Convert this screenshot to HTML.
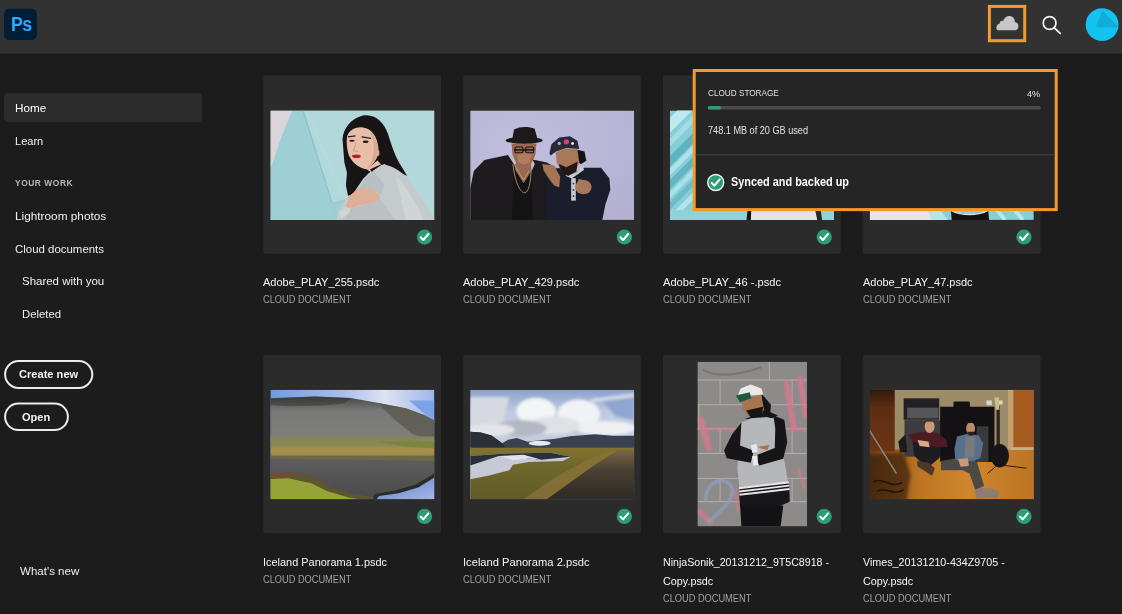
<!DOCTYPE html>
<html lang="en">
<head>
<meta charset="utf-8">
<title>Photoshop Home</title>
<style>
*{box-sizing:border-box;margin:0;padding:0}
html,body{width:1122px;height:614px;overflow:hidden;background:#1c1c1c;font-family:"Liberation Sans",sans-serif;color:#fff}
#bg{position:absolute;left:0;top:0;display:block}
.t{position:absolute;white-space:nowrap;line-height:16px;height:16px;display:block;transform-origin:0 50%}
#pst{position:absolute;left:10.7px;top:12.6px;color:#31a8ff;font-weight:bold;font-size:19.5px;line-height:22px;letter-spacing:-0.6px;transform:scaleX(.91);transform-origin:0 50%;white-space:nowrap}
</style>
</head>
<body>
<svg id="bg" width="1122" height="614" viewBox="0 0 1122 614">
<defs>
<g id="ck"><circle r="7.6" fill="#2d9d78"/><path d="M-3.9 0.3 L-1.3 3 L3.8 -3" fill="none" stroke="#fff" stroke-width="2" stroke-linecap="round" stroke-linejoin="round"/></g>
<clipPath id="avc"><circle cx="1102.1" cy="24.6" r="16.4"/></clipPath>
</defs>
<!-- header -->
<rect x="0" y="0" width="1122" height="53.5" fill="#323232"/>
<rect x="4.1" y="8.8" width="32.7" height="31.3" rx="5" fill="#001e36"/>
<rect x="989.4" y="6.4" width="35.3" height="34.3" fill="none" stroke="#f39a2c" stroke-width="3"/>
<path d="M998.6 30.3 C996.9 30.3 996.2 28.6 996.4 27.2 C996.6 25.2 998.2 23.9 999.6 23.8 C999.5 21.6 1001.2 20.3 1003.2 20.9 C1003.8 17.9 1006.4 15.9 1009.3 15.9 C1012.6 15.9 1015 18.4 1014.8 22 C1017 22.2 1018.5 24 1018.4 26.4 C1018.3 28.6 1016.9 30.3 1014.8 30.3 Z" fill="#c6c6c6"/>
<circle cx="1049.6" cy="23" r="6.4" fill="none" stroke="#f2f2f2" stroke-width="1.7"/>
<path d="M1054.3 27.9 L1060.2 33.4" stroke="#f2f2f2" stroke-width="1.9" stroke-linecap="round"/>
<circle cx="1102.1" cy="24.6" r="16.4" fill="#13c4f3"/>
<path d="M1102.2 10.4 L1095.5 27.4 L1119.5 27.4 Z" fill="#10add9" clip-path="url(#avc)"/>
<!-- sidebar -->
<rect x="4" y="93" width="198" height="28.9" rx="4" fill="#2c2c2c"/>
<rect x="5.1" y="361" width="87.2" height="26.9" rx="13.45" fill="none" stroke="#ebebeb" stroke-width="2"/>
<rect x="5.1" y="403.5" width="62.8" height="26.5" rx="13.25" fill="none" stroke="#ebebeb" stroke-width="2"/>
<!-- cards -->
<g fill="#2b2b2b">
<rect x="263.3" y="75.6" width="177.8" height="178.1" rx="2.5"/><rect x="463.1" y="75.6" width="177.8" height="178.1" rx="2.5"/><rect x="662.9" y="75.6" width="177.8" height="178.1" rx="2.5"/><rect x="862.7" y="75.6" width="177.8" height="178.1" rx="2.5"/>
<rect x="263.3" y="355.1" width="177.8" height="178.1" rx="2.5"/><rect x="463.1" y="355.1" width="177.8" height="178.1" rx="2.5"/><rect x="662.9" y="355.1" width="177.8" height="178.1" rx="2.5"/><rect x="862.7" y="355.1" width="177.8" height="178.1" rx="2.5"/>
</g>
<!-- photo 1 -->
<svg x="270.4" y="110.5" width="164" height="109.4" viewBox="0 0 921 614" preserveAspectRatio="none">
<defs><filter id="b3"><feGaussianBlur stdDeviation="3"/></filter><filter id="b8"><feGaussianBlur stdDeviation="8"/></filter>
<linearGradient id="p1bg" x1="0" x2="1"><stop offset="0" stop-color="#9dcfd5"/><stop offset=".45" stop-color="#add6dc"/><stop offset="1" stop-color="#b6d9e0"/></linearGradient></defs>
<rect width="921" height="614" fill="url(#p1bg)"/>
<path d="M0 0H124L62 150L0 335Z" fill="#d9d5da"/>
<path d="M124 0H183L345 515L335 614H0V335L62 150Z" fill="#9dcfd4"/>
<path d="M183 0H921V614H335L345 515Z" fill="#b2d8dc"/>
<path d="M345 515L420 498L400 614H335Z" fill="#9fcdd4"/>
<path d="M183 0L345 515" stroke="#8cc2c9" stroke-width="7" fill="none"/>
<path d="M200 0L420 498" stroke="#c2ecec" stroke-width="5" fill="none" opacity=".3"/>
<path d="M405 160C410 100 450 45 520 28C590 15 640 70 660 130C680 190 695 250 740 320L768 368L700 335L640 300L600 320L555 350L520 385L490 430L462 470L436 478L424 420L430 350L415 290Z" fill="#191516"/>
<path d="M430 150C438 110 480 88 520 95C570 100 600 150 606 205C612 250 590 290 560 315L600 280L625 305L570 350L540 330C500 325 455 290 440 250C430 220 426 180 430 150Z" fill="#e7bea7"/>
<path d="M560 330L625 300L640 320L575 355Z" fill="#151313"/>
<ellipse cx="483" cy="257" rx="25" ry="10" fill="#bf1a2c"/>
<path d="M560 120C600 150 612 215 600 262L560 315L540 330C575 290 590 220 575 160Z" fill="#d2a48d" opacity=".8"/>
<path d="M436 148L478 142M512 148L566 156" stroke="#2a1c1a" stroke-width="7" fill="none"/>
<ellipse cx="458" cy="170" rx="15" ry="6" fill="#2a1a18"/><ellipse cx="535" cy="176" rx="17" ry="7" fill="#2a1a18"/>
<path d="M480 180L468 226L490 230" stroke="#cf9c84" stroke-width="6" fill="none"/>
<ellipse cx="603" cy="238" rx="9" ry="18" fill="#dcae96"/>
<path d="M625 305C680 305 730 340 770 380C820 440 870 530 921 600V614H370L382 560L420 505L468 470L500 420L540 370L580 335Z" fill="#c5cbcd"/>
<path d="M700 360C760 420 820 520 860 614H760C740 520 720 440 700 360Z" fill="#d3d8d9" opacity=".7"/>
<path d="M440 482L500 432L560 440L610 468L616 500L562 522L500 532L452 552L424 542Z" fill="#ddb097"/>
<path d="M424 542L452 552L440 580L400 600L385 570Z" fill="#d0d5d6"/><path d="M540 372L580 336L640 420L620 470L560 440L500 432Z" fill="#b2babd" opacity=".7"/><path d="M452 552L562 522L616 500L700 614H400L440 580Z" fill="#b6bdc0" opacity=".8"/>
</svg>
<!-- photo 2 -->
<svg x="470.2" y="110.5" width="164" height="109.4" viewBox="0 0 921 614" preserveAspectRatio="none">
<defs><radialGradient id="p2bg" cx=".3" cy=".3" r=".9"><stop offset="0" stop-color="#c1bedd"/><stop offset="1" stop-color="#b4b0d1"/></radialGradient></defs>
<rect width="921" height="614" fill="url(#p2bg)"/>
<!-- left man -->
<path d="M0 440L20 340L80 278L212 250L245 300L300 400L345 340L372 280L430 300L445 420V614H0Z" fill="#1d1b1e"/>
<path d="M232 185H372L366 250L342 300L345 350L300 410L250 340L258 295L238 250Z" fill="#9a6850"/>
<path d="M245 320L300 410L345 335L350 614H235Z" fill="#141315"/>
<path d="M248 300L300 385L340 310" fill="#9a6850"/>
<path d="M240 300C250 400 280 460 305 462C330 460 340 400 342 330" fill="none" stroke="#b49a6a" stroke-width="5"/>
<path d="M250 310L300 390L330 340" fill="none" stroke="#c4b08a" stroke-width="4"/>
<path d="M236 160L246 106C280 88 330 88 362 102L378 160Z" fill="#1b191b"/>
<ellipse cx="303" cy="168" rx="104" ry="19" fill="#1b191b"/>
<path d="M262 245L300 235L345 245L335 290L300 305L268 288Z" fill="#b07c60"/><path d="M246 222H360" stroke="#1a1414" stroke-width="8"/>
<rect x="252" y="205" width="44" height="32" rx="6" fill="none" stroke="#1a1414" stroke-width="6"/>
<rect x="312" y="205" width="44" height="32" rx="6" fill="none" stroke="#1a1414" stroke-width="6"/>
<!-- right man body -->
<path d="M430 330L520 322L545 372L640 322L735 322L782 382L787 445L760 525L742 614H425V420Z" fill="#1a1d2b"/>
<path d="M350 275L430 292L480 320L440 345L372 320Z" fill="#1d1b1e"/>
<path d="M405 300L470 308L505 370L500 432L470 420L440 380L412 335Z" fill="#a67454"/>
<path d="M533 365L570 382L640 332L628 308L600 345L558 362Z" fill="#c9c9cf"/>
<rect x="567" y="380" width="26" height="126" fill="#c9c9cf"/>
<circle cx="580" cy="410" r="5" fill="#222"/><circle cx="580" cy="445" r="5" fill="#222"/><circle cx="580" cy="480" r="5" fill="#222"/>
<path d="M600 220L642 230L652 282L622 302L600 282Z" fill="#151214"/>
<path d="M480 236L540 213L602 218L612 290L592 342L546 358L506 332L486 290Z" fill="#a87858"/>
<path d="M498 300L540 318L604 286L596 342L550 368L510 342Z" fill="#231815"/>
<path d="M445 242L456 190L500 152L560 145L602 170L612 216L540 210L480 232L452 252Z" fill="#2a2838"/>
<circle cx="540" cy="176" r="15" fill="#d2447f"/><circle cx="500" cy="185" r="9" fill="#7fc4c0"/><circle cx="575" cy="185" r="8" fill="#e8e0e8"/>
<ellipse cx="636" cy="430" rx="46" ry="40" fill="#a87858"/>
<path d="M600 410L610 385L640 392" fill="#a87858"/>
</svg>
<!-- photo 3 (mostly hidden) -->
<svg x="670.0" y="110.5" width="164" height="109.4" viewBox="0 0 921 614" preserveAspectRatio="none">
<rect width="921" height="614" fill="#88ced7"/>
<g fill="none" filter="url(#b3)">
<path d="M-50 133L250 -167" stroke="#bdeaef" stroke-width="60"/>
<path d="M-50 230L250 -70" stroke="#a2dde4" stroke-width="30"/>
<path d="M-50 335L250 35" stroke="#5fb2bf" stroke-width="42"/>
<path d="M-50 395L250 95" stroke="#b0e4ea" stroke-width="26"/>
<path d="M-50 466L250 166" stroke="#62b4c1" stroke-width="36"/>
<path d="M-50 526L250 226" stroke="#a8e0e7" stroke-width="26"/>
<path d="M-50 585L250 285" stroke="#6cbcc8" stroke-width="30"/>
<path d="M-50 660L250 360" stroke="#b0e4ea" stroke-width="30"/>
</g>
<path d="M0 560H921V614H0Z" fill="#8ed2da"/>
<path d="M437 540H459L454 614H430Z" fill="#1a1616"/>
<path d="M459 540H812L827 614H454Z" fill="#dfe3e4"/>
<path d="M812 540H844L854 614H827Z" fill="#2a2626"/>
</svg>
<!-- photo 4 (mostly hidden) -->
<svg x="869.8" y="110.5" width="164" height="109.4" viewBox="0 0 921 614" preserveAspectRatio="none">
<rect width="921" height="614" fill="#86cfd6"/>
<path d="M0 540H320L350 614H0Z" fill="#e6e4e6"/>
<path d="M320 540H380L440 614H350Z" fill="#b7e3e6"/>
<path d="M455 560C520 590 600 590 665 560L670 614H460Z" fill="#151314"/>
<path d="M455 560C520 592 600 592 665 560" fill="none" stroke="#e0e0e0" stroke-width="8"/>
<path d="M700 540L760 614M800 540L860 614" stroke="#b9e6ea" stroke-width="22"/>
</svg>
<!-- photo 5 Iceland 1 -->
<svg x="270.4" y="389.8" width="164" height="109.4" viewBox="0 0 921 614" preserveAspectRatio="none">
<defs>
<linearGradient id="p5sky" x1="0" x2="1"><stop offset="0" stop-color="#6f9ae2"/><stop offset=".45" stop-color="#a9c0ec"/><stop offset=".7" stop-color="#dde3f1"/><stop offset="1" stop-color="#9db6ea"/></linearGradient>
<linearGradient id="p5mt" x1="0" y1="0" x2="0" y2="1"><stop offset="0" stop-color="#454543"/><stop offset=".1" stop-color="#565654"/><stop offset=".3" stop-color="#787876"/><stop offset=".8" stop-color="#7e7e7b"/><stop offset="1" stop-color="#84845e"/></linearGradient>
<linearGradient id="p5pl" x1="0" y1="0" x2="0" y2="1"><stop offset="0" stop-color="#84845e"/><stop offset=".4" stop-color="#8c8854"/><stop offset=".6" stop-color="#a8924e"/><stop offset=".85" stop-color="#a08a48"/><stop offset="1" stop-color="#5c5c38"/></linearGradient>
<linearGradient id="p5wt" x1="0" y1="0" x2="0" y2="1"><stop offset="0" stop-color="#5e5e5e"/><stop offset="1" stop-color="#4a4a4c"/></linearGradient>
<linearGradient id="p5gr" x1="0" y1="0" x2="0" y2="1"><stop offset="0" stop-color="#6a5a2c"/><stop offset=".3" stop-color="#8c9a32"/><stop offset="1" stop-color="#9aa838"/></linearGradient>
<linearGradient id="p5bl" x1="0" y1="0" x2="1" y2="1"><stop offset="0" stop-color="#5f7fc8"/><stop offset="1" stop-color="#a3b6e6"/></linearGradient>
</defs>
<rect width="921" height="614" fill="url(#p5sky)"/>
<path d="M780 60L921 60V190L860 130Z" fill="#7ea2e6"/>
<path d="M0 47L250 38L450 46L600 72L760 104L860 140L921 172V300H0Z" fill="url(#p5mt)"/>
<path d="M600 72L760 104L860 140L921 172V285L800 250L700 170Z" fill="#55564a" opacity=".7"/>
<path d="M0 47L250 38L450 46L420 75L300 88L100 92L0 85Z" fill="#2f2f2e" opacity=".45"/>
<rect y="262" width="921" height="120" fill="url(#p5pl)"/>
<path d="M600 290H921V330L760 320Z" fill="#76843a" opacity=".8"/>
<path d="M0 375H921V614H0Z" fill="url(#p5wt)"/>
<path d="M0 375H921V400L500 392L0 385Z" fill="#6c6f40" opacity=".8"/>
<path d="M921 470L820 530L700 565L590 585L560 614H921Z" fill="#2b2b2a"/>
<path d="M921 492L830 548L720 580L610 596L596 614H921Z" fill="url(#p5bl)"/>
<path d="M0 470L100 464L250 488L330 540L450 583L580 600V614H0Z" fill="#5c5630"/><path d="M0 500L100 496L230 525L320 570L440 605L500 614H0Z" fill="#96a438"/><path d="M0 470L100 464L200 480L120 490L0 498Z" fill="#7a4a30" opacity=".7"/>
</svg>
<!-- photo 6 Iceland 2 -->
<svg x="470.2" y="389.8" width="164" height="109.4" viewBox="0 0 921 614" preserveAspectRatio="none">
<defs>
<linearGradient id="p6sky" x1="0" y1="0" x2="0" y2="1"><stop offset="0" stop-color="#8ba1cd"/><stop offset=".2" stop-color="#c0cbe0"/><stop offset="1" stop-color="#cdd1da"/></linearGradient>
<linearGradient id="p6rd" x1="0" y1="0" x2="0" y2="1"><stop offset="0" stop-color="#7a6444"/><stop offset=".4" stop-color="#4a4034"/><stop offset="1" stop-color="#2e2a26"/></linearGradient>
<linearGradient id="p6gr" x1="0" y1="0" x2="0" y2="1"><stop offset="0" stop-color="#84722e"/><stop offset=".35" stop-color="#6e682c"/><stop offset="1" stop-color="#625a28"/></linearGradient>
</defs>
<rect width="921" height="614" fill="url(#p6sky)"/>
<g filter="url(#b8)">
<path d="M0 40H220L180 200L0 220Z" fill="#d6d9e0"/>
<ellipse cx="370" cy="120" rx="110" ry="75" fill="#f4f5f7"/>
<ellipse cx="610" cy="135" rx="120" ry="80" fill="#f1f2f5"/>
<ellipse cx="760" cy="215" rx="170" ry="40" fill="#eeeff2"/>
<ellipse cx="470" cy="200" rx="150" ry="50" fill="#dfe1e6"/>
<ellipse cx="280" cy="215" rx="150" ry="45" fill="#b4b8c2"/>
<ellipse cx="120" cy="225" rx="130" ry="35" fill="#e3e5ea"/>
<path d="M700 20H921V170L820 150Z" fill="#8ea6d0"/>
<path d="M680 60L921 30" stroke="#d9dfea" stroke-width="20"/>
</g>
<path d="M0 235L60 240L120 256L180 300L212 280L262 270L322 292L400 282L470 276L560 260L700 250L800 258L921 258V335H0Z" fill="#394150"/>
<path d="M0 235L60 240L120 256L180 300L200 325H0Z" fill="#2b3038"/>
<ellipse cx="390" cy="300" rx="62" ry="14" fill="#e6e9ee" filter="url(#b3)"/>
<rect y="325" width="921" height="289" fill="url(#p6gr)"/>
<path d="M0 372L200 358L450 353L565 376L520 400L330 405L240 420L220 452L100 482L0 502Z" fill="#c5cad6"/>
<path d="M0 372L200 358L450 353L565 376L400 392L160 372L0 425Z" fill="#2b3038"/>
<path d="M160 372L240 395L330 385L400 392L300 365Z" fill="#dfe3ea"/>
<path d="M830 338H921V614H430L560 520L700 420Z" fill="url(#p6rd)"/>
<path d="M700 372L830 338L700 420L560 520L430 614H300L480 490Z" fill="#8a7238" opacity=".8"/>
</svg>
<!-- photo 7 NinjaSonik -->
<svg x="697.4" y="361.8" width="109.6" height="164.6" viewBox="0 0 411 614" preserveAspectRatio="none">
<rect width="411" height="614" fill="#8d8b89"/>
<g stroke="#b4b0ac" stroke-width="3.5" fill="none"><path d="M0 68H411M0 160H411M0 250H411M0 342H411M0 435H411M0 522H411"/><path d="M270 0V68M85 68V160M355 68V160M210 160V250M5 160V250M85 250V342M355 250V342M210 342V435M85 435V522M355 435V522M210 522V614"/></g>
<g fill="none" stroke="#d9788e" stroke-linecap="round" opacity=".8" filter="url(#b3)"><path d="M12 215L42 320" stroke-width="24"/><path d="M0 252H150" stroke-width="8"/><path d="M335 80L362 250" stroke-width="22"/><path d="M385 60L405 200" stroke-width="20"/><path d="M140 480L155 560" stroke-width="10"/><path d="M340 255H411" stroke-width="8"/><path d="M10 560L50 600" stroke-width="18"/><path d="M380 400L400 470" stroke-width="10"/></g>
<path d="M30 520C30 440 110 420 130 470C140 520 80 560 40 600" fill="none" stroke="#8e9cbc" stroke-width="14" opacity=".8"/>
<path d="M20 30C80 60 150 50 240 20" fill="none" stroke="#6e6c6c" stroke-width="8" opacity=".7"/>
<path d="M240 118L276 160L272 200L244 196Z" fill="#161414"/>
<path d="M165 140L240 124L250 180L226 206L190 201L170 176Z" fill="#a87450"/>
<path d="M183 182L246 168L242 206L206 217Z" fill="#1a1412"/>
<path d="M150 130L162 100L200 85L240 100L247 122Z" fill="#e9e9e5"/>
<path d="M144 126L196 114L202 136L160 151Z" fill="#1c5a3c"/>
<path d="M178 212L270 186L302 200L252 222Z" fill="#161416"/>
<path d="M165 226L200 211L260 206L300 216L312 300L332 400L342 466L160 492L150 400L155 300Z" fill="#b5b7bb"/>
<path d="M285 200L326 216L337 300L322 362L232 387L215 350L290 322L292 250Z" fill="#171518"/>
<path d="M165 226L130 270L100 330L110 360L200 377L212 332L160 312Z" fill="#171518"/>
<path d="M200 312L222 306L226 336L206 340ZM205 352L225 348L228 384L210 388Z" fill="#e8e8e8"/>
<path d="M225 318L270 310L262 330Z" fill="#a87450"/>
<path d="M156 468L342 446L345 480L160 504Z" fill="#e6e6e6"/>
<path d="M157 478L343 456M158 490L344 468" stroke="#1a1a1c" stroke-width="5"/>
<path d="M157 500L345 478L346 522L300 542H160Z" fill="#17161a"/>
<path d="M160 536H322L312 614H165Z" fill="#121214"/>
</svg>
<!-- photo 8 Vimes -->
<svg x="869.8" y="389.8" width="164" height="109.4" viewBox="0 0 921 614" preserveAspectRatio="none">
<defs>
<linearGradient id="p8fl" x1="0" y1="0" x2="1" y2="0"><stop offset="0" stop-color="#6a3c12"/><stop offset=".3" stop-color="#bc7422"/><stop offset=".6" stop-color="#d0862c"/><stop offset="1" stop-color="#bc7424"/></linearGradient>
<linearGradient id="p8ld" x1="0" y1="0" x2="0" y2="1"><stop offset="0" stop-color="#34180a"/><stop offset=".3" stop-color="#5e2e12"/><stop offset="1" stop-color="#6a3414"/></linearGradient>
</defs>
<rect width="921" height="614" fill="#9c8c68"/>
<rect y="335" width="921" height="279" fill="url(#p8fl)"/>
<rect width="140" height="345" fill="url(#p8ld)"/>
<rect x="805" width="116" height="328" fill="#a65c20"/>
<rect x="776" width="30" height="335" fill="#c4a070"/>
<rect x="790" y="322" width="131" height="16" fill="#c8b088"/>
<path d="M-40 370L190 350L230 480L200 650H-40Z" fill="#3a220e" opacity=".7" filter="url(#b8)"/>
<path d="M0 230L150 470" stroke="#8a8a88" stroke-width="8"/>
<rect x="190" y="48" width="200" height="120" fill="#222024"/>
<rect x="210" y="100" width="176" height="60" fill="#55555a"/>
<rect x="195" y="170" width="215" height="205" fill="#3c3c40"/>
<rect x="395" y="95" width="305" height="310" fill="#131113"/>
<rect x="470" y="65" width="92" height="40" rx="8" fill="#131113"/>
<rect x="600" y="205" width="66" height="200" fill="#3a3a3c"/>
<rect x="655" y="60" width="30" height="26" fill="#d8d4c8"/><rect x="716" y="60" width="30" height="22" fill="#d8d4c8"/>
<rect x="712" y="90" width="18" height="250" fill="#2a2220"/>
<path d="M700 45L724 40L728 112L708 112Z" fill="#cdbd8c"/>
<ellipse cx="730" cy="370" rx="52" ry="66" fill="#171517"/>
<path d="M160 290L200 250L210 350L170 350Z" fill="#1c1a1a"/>
<!-- left man -->
<path d="M240 290L400 320L392 382L342 424L282 402L250 372Z" fill="#1d1d21"/>
<path d="M215 252L300 236L380 241L430 282L436 322L380 322L300 302L240 292Z" fill="#4c1c24"/>
<ellipse cx="336" cy="206" rx="28" ry="36" fill="#c99a7a"/>
<path d="M304 190C306 160 366 160 368 190L360 178L312 180Z" fill="#4a3020"/>
<path d="M268 282L330 290L336 322L280 316Z" fill="#d9a988"/>
<path d="M265 400L330 410L365 440L350 482L300 450L268 430Z" fill="#4a3828"/>
<!-- right man -->
<path d="M400 400L480 385L600 400L642 540L592 562L560 470L520 452L400 452Z" fill="#4b4945"/>
<path d="M490 262L550 246L612 256L637 302L622 382L582 402L480 392L475 332Z" fill="#58708c"/>
<path d="M538 262L590 262L586 380L532 380Z" fill="#7a7a7a"/>
<ellipse cx="566" cy="216" rx="25" ry="35" fill="#b88c68"/>
<path d="M538 200C540 160 598 160 600 205L592 186L546 186Z" fill="#181414"/>
<path d="M548 236L586 236L580 256L556 256Z" fill="#2a1c18"/>
<path d="M495 388L552 384L556 428L510 432Z" fill="#c99a7a"/>
<path d="M585 560C620 545 700 548 726 570L722 606L600 612Z" fill="#8e7e72"/>
<path d="M660 470L720 420M720 420L880 440" stroke="#1a1412" stroke-width="5" fill="none"/>
<path d="M20 520C60 480 120 560 180 520M40 570C90 540 140 600 190 560" stroke="#20140a" stroke-width="8" fill="none"/>
</svg>

<use href="#ck" x="424.6" y="237"/><use href="#ck" x="624.4" y="237"/><use href="#ck" x="824.2" y="237"/><use href="#ck" x="1024" y="237"/>
<use href="#ck" x="424.6" y="516.4"/><use href="#ck" x="624.4" y="516.4"/><use href="#ck" x="824.2" y="516.4"/><use href="#ck" x="1024" y="516.4"/>
<!-- popup -->
<rect x="694.2" y="70.5" width="362" height="139.1" fill="#252525" stroke="#f39a2c" stroke-width="3"/>
<rect x="707.9" y="106" width="333" height="3.4" rx="1.5" fill="#4a4a4a"/>
<rect x="707.9" y="106" width="13" height="3.4" rx="1.5" fill="#2d9d78"/>
<rect x="695.7" y="154.2" width="359" height="1.2" fill="#3f3f3f"/>
<g transform="translate(715.7 182.5)"><circle r="8" fill="#2d9d78" stroke="#f4f4f4" stroke-width="1.4"/><path d="M-4 0.4 L-1.3 3.2 L4 -3.2" fill="none" stroke="#fff" stroke-width="2" stroke-linecap="round" stroke-linejoin="round"/></g>
</svg>
<span id="pst">Ps</span>
<span class="t" id="t0" style="left:15.30px;top:99.78px;font-size:11.6px;color:#ffffff;transform:scaleX(1.0085);">Home</span>
<span class="t" id="t1" style="left:15.30px;top:132.68px;font-size:11.6px;color:#f0f0f0;transform:scaleX(0.9509);">Learn</span>
<span class="t" id="t2" style="left:15.30px;top:175.11px;font-size:9.2px;color:#b9b9b9;font-weight:bold;letter-spacing:0.6px;transform:scaleX(0.9152);">YOUR WORK</span>
<span class="t" id="t3" style="left:15.40px;top:208.28px;font-size:11.6px;color:#f0f0f0;transform:scaleX(1.0179);">Lightroom photos</span>
<span class="t" id="t4" style="left:15.40px;top:240.58px;font-size:11.6px;color:#f0f0f0;transform:scaleX(0.9863);">Cloud documents</span>
<span class="t" id="t5" style="left:22.40px;top:273.08px;font-size:11.6px;color:#f0f0f0;transform:scaleX(0.9887);">Shared with you</span>
<span class="t" id="t6" style="left:22.40px;top:305.58px;font-size:11.6px;color:#f0f0f0;transform:scaleX(0.9783);">Deleted</span>
<span class="t" id="t7" style="left:18.80px;top:366.25px;font-size:11.4px;color:#f4f4f4;font-weight:bold;transform:scaleX(0.9740);">Create new</span>
<span class="t" id="t8" style="left:21.70px;top:408.85px;font-size:11.4px;color:#f4f4f4;font-weight:bold;transform:scaleX(0.9682);">Open</span>
<span class="t" id="t9" style="left:19.70px;top:563.48px;font-size:11.6px;color:#f0f0f0;transform:scaleX(0.9956);">What's new</span>
<span class="t" id="t10" style="left:263.10px;top:274.22px;font-size:11.5px;color:#f6f6f6;transform:scaleX(0.9589);">Adobe_PLAY_255.psdc</span>
<span class="t" id="t11" style="left:462.90px;top:274.22px;font-size:11.5px;color:#f6f6f6;transform:scaleX(0.9589);">Adobe_PLAY_429.psdc</span>
<span class="t" id="t12" style="left:662.70px;top:274.22px;font-size:11.5px;color:#f6f6f6;transform:scaleX(0.9680);">Adobe_PLAY_46 -.psdc</span>
<span class="t" id="t13" style="left:862.50px;top:274.22px;font-size:11.5px;color:#f6f6f6;transform:scaleX(0.9531);">Adobe_PLAY_47.psdc</span>
<span class="t" id="t14" style="left:263.10px;top:553.62px;font-size:11.5px;color:#f6f6f6;transform:scaleX(0.9508);">Iceland Panorama 1.psdc</span>
<span class="t" id="t15" style="left:462.90px;top:553.62px;font-size:11.5px;color:#f6f6f6;transform:scaleX(0.9699);">Iceland Panorama 2.psdc</span>
<span class="t" id="t16" style="left:662.70px;top:553.62px;font-size:11.5px;color:#f6f6f6;transform:scaleX(0.9239);">NinjaSonik_20131212_9T5C8918 -</span>
<span class="t" id="t17" style="left:662.70px;top:573.22px;font-size:11.5px;color:#f6f6f6;transform:scaleX(0.9386);">Copy.psdc</span>
<span class="t" id="t18" style="left:862.50px;top:553.62px;font-size:11.5px;color:#f6f6f6;transform:scaleX(0.9331);">Vimes_20131210-434Z9705 -</span>
<span class="t" id="t19" style="left:862.50px;top:573.22px;font-size:11.5px;color:#f6f6f6;transform:scaleX(0.9386);">Copy.psdc</span>
<span class="t" id="t20" style="left:263.10px;top:292.04px;font-size:10px;color:#a2a2a2;transform:scaleX(0.9240);">CLOUD DOCUMENT</span>
<span class="t" id="t21" style="left:462.90px;top:292.04px;font-size:10px;color:#a2a2a2;transform:scaleX(0.9240);">CLOUD DOCUMENT</span>
<span class="t" id="t22" style="left:662.70px;top:292.04px;font-size:10px;color:#a2a2a2;transform:scaleX(0.9240);">CLOUD DOCUMENT</span>
<span class="t" id="t23" style="left:862.50px;top:292.04px;font-size:10px;color:#a2a2a2;transform:scaleX(0.9240);">CLOUD DOCUMENT</span>
<span class="t" id="t24" style="left:263.10px;top:571.53px;font-size:10px;color:#a2a2a2;transform:scaleX(0.9240);">CLOUD DOCUMENT</span>
<span class="t" id="t25" style="left:462.90px;top:571.53px;font-size:10px;color:#a2a2a2;transform:scaleX(0.9240);">CLOUD DOCUMENT</span>
<span class="t" id="t26" style="left:662.70px;top:591.03px;font-size:10px;color:#a2a2a2;transform:scaleX(0.9240);">CLOUD DOCUMENT</span>
<span class="t" id="t27" style="left:862.50px;top:591.03px;font-size:10px;color:#a2a2a2;transform:scaleX(0.9240);">CLOUD DOCUMENT</span>
<span class="t" id="t28" style="left:707.90px;top:85.31px;font-size:9.2px;color:#e2e2e2;transform:scaleX(0.8907);">CLOUD STORAGE</span>
<span class="t" id="t29" style="left:1027.10px;top:85.80px;font-size:9.8px;color:#e8e8e8;transform:scaleX(0.9244);">4%</span>
<span class="t" id="t30" style="left:707.90px;top:122.84px;font-size:10px;color:#e2e2e2;transform:scaleX(0.9131);">748.1 MB of 20 GB used</span>
<span class="t" id="t31" style="left:730.60px;top:174.14px;font-size:12px;color:#ffffff;font-weight:bold;transform:scaleX(0.9074);">Synced and backed up</span>
</body>
</html>
